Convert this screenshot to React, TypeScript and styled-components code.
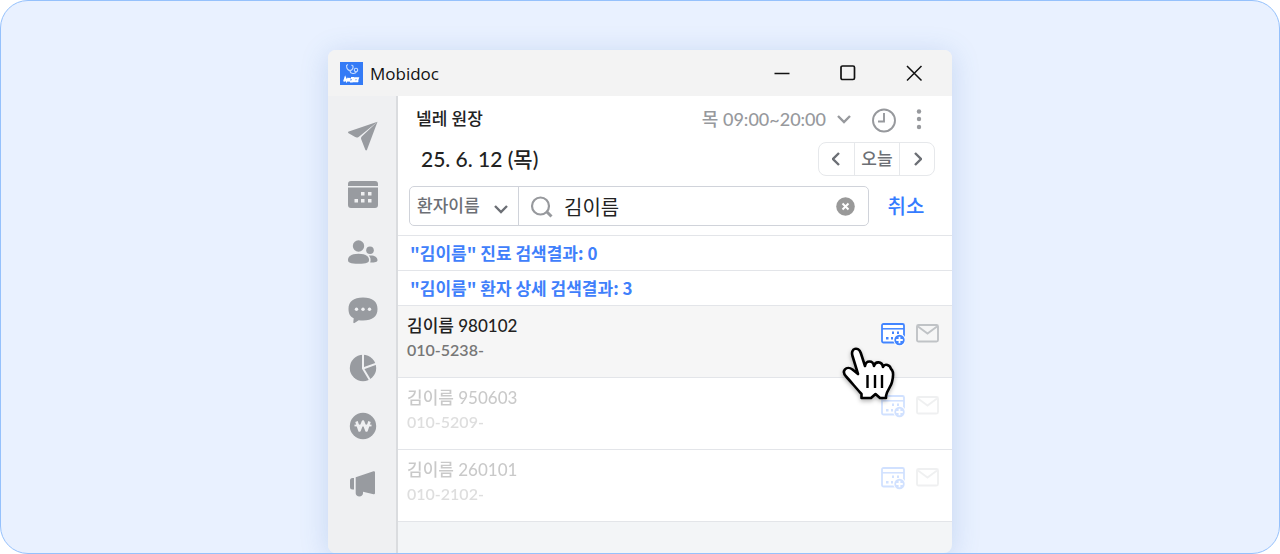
import React, { useState } from "react";
import styled, { createGlobalStyle } from "styled-components";

const GlobalStyle = createGlobalStyle`
  *, *::before, *::after { box-sizing: border-box; }
  body { margin: 0; background: #fff; }
  button, input, select { font: inherit; color: inherit; }
  button { padding: 0; border: 0; background: none; cursor: pointer; }
  h1, h2, p, ul { margin: 0; padding: 0; font: inherit; }
  svg { display: block; flex: none; }
`;

const Stage = styled.main`
  display: flex;
  justify-content: center;
  height: 100vh;
  padding: 49px 24px 0;
  overflow: hidden;
  border: 1px solid #95c1fc;
  border-radius: 28px;
  background: #e9f1ff;
  font-family: Lato, "Noto Sans CJK KR", sans-serif;
`;

const Window = styled.section`
  display: flex;
  flex-direction: column;
  width: 100%;
  max-width: 624px;
  min-height: 100%;
  border-radius: 8px;
  box-shadow: 0 4px 28px rgba(70, 120, 190, 0.22);
  background: #f3f5f7;
  overflow: hidden;
`;

const TitleBar = styled.header`
  display: flex;
  align-items: center;
  height: 46px;
  padding: 0 29px 0 12px;
  background: #f3f3f3;
  color: #111;
`;

const AppName = styled.h1`
  flex: 1;
  margin-left: 7px;
  padding-top: 2px;
  font: 400 17px/24px "Open Sans", "Noto Sans", sans-serif;
`;

const WindowControls = styled.div`
  display: flex;
  gap: 48px;
`;

const Body = styled.div`
  display: flex;
  flex: 1;
`;

const Rail = styled.nav`
  display: flex;
  flex-direction: column;
  gap: 26px;
  width: 70px;
  padding: 24px 0 0 2px;
  border-right: 2px solid #dadcdf;
  background: #eff0f2;
  color: #989ba0;
`;

const RailButton = styled.button`
  display: flex;
  justify-content: center;
  align-items: center;
  height: 32px;
`;

const Content = styled.div`
  flex: 1;
  min-width: 0;
`;

const Panel = styled.div`
  background: #fff;
  border-bottom: 1px solid #e3e5e9;
  padding: 8px 0 9px 11px;
`;

const Row = styled.div`
  display: flex;
  align-items: center;
  justify-content: space-between;
`;

const DoctorRow = styled(Row)`
  height: 32px;
  padding: 0 30px 0 7px;
`;

const Doctor = styled.h2`
  padding-bottom: 3px;
  color: #222;
  font-size: 17px;
  font-weight: 500;
  line-height: 24px;
`;

const Hours = styled.div`
  display: flex;
  align-items: center;
  color: #97999d;
`;

const HoursButton = styled.button`
  display: flex;
  align-items: center;
  gap: 11px;
  margin-right: 20px;
  padding-bottom: 2px;
  font-size: 18px;
  font-weight: 500;
  line-height: 24px;
`;

const MoreButton = styled.button`
  margin-left: 19px;
`;

const DateRow = styled(Row)`
  height: 50px;
  padding: 0 17px 4px 12px;
`;

const DateText = styled.p`
  color: #222;
  font-size: 21px;
  font-weight: 500;
  line-height: 28px;
`;

const DateNav = styled.div`
  display: flex;
  height: 34px;
  border: 1px solid #e6e8eb;
  border-radius: 8px;
  color: #6c6f75;
`;

const DateButton = styled.button<{ $wide?: boolean }>`
  display: flex;
  align-items: center;
  justify-content: center;
  width: ${(p) => (p.$wide ? 45 : 35)}px;
  font-size: 17px;
  font-weight: 500;
  line-height: 24px;
  & + & { border-left: 1px solid #e6e8eb; }
`;

const SearchRow = styled.form`
  display: flex;
  align-items: center;
`;

const SearchBox = styled.div`
  display: flex;
  flex: 1;
  min-width: 0;
  height: 40px;
  border: 1px solid #d0d3da;
  border-radius: 5px;
`;

const FieldPicker = styled.div`
  display: grid;
  grid-template-columns: 1fr auto;
  align-items: center;
  width: 109px;
  padding-right: 10px;
  border-right: 1px solid #d0d3da;
  color: #6c6f75;
  svg { grid-area: 1 / 2; pointer-events: none; margin-top: 6px; }
`;

const FieldSelect = styled.select`
  grid-area: 1 / 1 / 2 / 3;
  height: 38px;
  padding: 0 0 2px 7px;
  border: 0;
  outline: 0;
  appearance: none;
  background: transparent;
  font-size: 17px;
  font-weight: 500;
`;

const QueryField = styled.label`
  display: flex;
  flex: 1;
  align-items: center;
  gap: 10px;
  min-width: 0;
  padding: 0 13px 0 11px;
  color: #97999d;
`;

const QueryInput = styled.input`
  flex: 1;
  min-width: 0;
  height: 36px;
  padding: 0;
  border: 0;
  outline: 0;
  background: transparent;
  color: #222;
  font-size: 20px;
  font-weight: 400;
`;

const CancelButton = styled.button`
  width: 83px;
  padding-right: 9px;
  color: #347bff;
  font-size: 20px;
  font-weight: 500;
  line-height: 28px;
`;

const ResultHeading = styled.h2`
  height: 35px;
  padding-left: 12px;
  border-bottom: 1px solid #e3e5e9;
  background: #fff;
  color: #3f80fb;
  font-family: "Noto Sans CJK KR", sans-serif;
  font-size: 17px;
  font-weight: 700;
  line-height: 34px;
`;

const PatientList = styled.ul`
  list-style: none;
`;

const PatientRow = styled.li<{ $active?: boolean }>`
  display: flex;
  justify-content: space-between;
  height: 72px;
  padding: 7px 13px 0 9px;
  border-bottom: 1px solid #e3e5e9;
  background: ${(p) => (p.$active ? "#f6f6f6" : "#fff")};
  & > div { opacity: ${(p) => (p.$active ? 1 : 0.24)}; }
`;

const PatientName = styled.p`
  color: #222;
  font-size: 17px;
  font-weight: 500;
  line-height: 26px;
`;

const Phone = styled.p`
  color: #777;
  font-size: 16px;
  font-weight: 600;
  line-height: 22px;
`;

const Actions = styled.div`
  display: flex;
  align-items: flex-start;
  gap: 11px;
  padding-top: 10px;
  position: relative;
`;

const Hand = styled.svg`
  position: absolute;
  top: 34px;
  right: 45px;
  z-index: 1;
  overflow: visible;
  pointer-events: none;
  filter: drop-shadow(0 2px 2px rgba(0, 0, 0, 0.3));
`;

const Logo = () => (
  <svg width="23" height="23" viewBox="0 0 23 23" aria-hidden="true">
    <path fill="#347bf6" d="M0 0h23v23H0z" />
    <g fill="none" stroke="#c3daff" strokeWidth="1.1">
      <path d="M8 2.500 6.500 3.500c0 3 1.500 5 3.500 5s3.500-2 3-4.500L11.500 3M10 8.500c0 3.500 5 4 6.500 1.300" />
      <circle cx="16" cy="8" r="1.700" />
    </g>
    <path stroke="#fff" strokeWidth="1.900" fill="none" d="m4 19.500 1.200-3.500 1.300 3 2-3-1 3.500m2.500-3.500-1 3.500m2-3.500h2l-1 3.500h-2m4-.2 1-3h3l-1 3zm3-.500 1.200 1" />
  </svg>
);

const Chevron = ({ d = "m1 1 6 6 6-6", w = 14, h = 9 }: { d?: string; w?: number; h?: number }) => (
  <svg width={w} height={h} viewBox={`0 0 ${w} ${h}`} fill="none" stroke="currentColor" strokeWidth="2.400" aria-hidden="true">
    <path d={d} />
  </svg>
);

const CalendarAdd = () => (
  <svg width="24" height="23" viewBox="0 0 24 23" aria-hidden="true">
    <rect x="1" y="1" width="22" height="18.500" rx="1.500" fill="#fff" stroke="#4285ff" strokeWidth="1.800" />
    <path stroke="#4285ff" strokeWidth="1.500" d="M1 5.800h22" />
    <path fill="#4285ff" d="M11 8.500h2V11h-2zM16 8.500h2V11h-2zM5 14h2.500v2.500H5zM10 14h2v2.500h-2z" />
    <circle cx="18.500" cy="17" r="6.200" fill="#fff" />
    <circle cx="18.500" cy="17" r="5.200" fill="#4285ff" />
    <path stroke="#fff" strokeWidth="1.800" d="M18.500 13.700v6.600M15.200 17h6.600" />
  </svg>
);

const Mail = () => (
  <svg width="23" height="20" viewBox="0 0 23 20" fill="none" stroke="#c0c3c6" strokeWidth="1.900" aria-hidden="true">
    <rect x="1" y="2" width="21" height="16.500" rx="1.500" />
    <path d="m2 3.500 9.500 7 9.500-7" />
  </svg>
);

const railItems = [
  { label: "보내기", icon: (
    <svg width="30" height="30" viewBox="0 0 30 30" fill="currentColor">
      <path d="M29.500.800.800 10.600c-.9.300-1 1.200-.2 1.700l6.600 3.800c1.200.6 2.300.5 3.400-.2zM29.500.800 14 15.200c-1 .9-1.200 1.900-.8 3l4.100 10.500c.4.900 1.300.9 1.700 0z" />
    </svg>) },
  { label: "일정", icon: (
    <svg width="30" height="27" viewBox="0 0 30 27" fill="currentColor">
      <path d="M3 0h24a3 3 0 0 1 3 3v2H0V3a3 3 0 0 1 3-3z" />
      <path fillRule="evenodd" d="M0 6.500h30V24a3 3 0 0 1-3 3H3a3 3 0 0 1-3-3zm13 4.500v3.500h3.500V11zm7 0v3.500h3.500V11zM6.500 18v3.500H10V18zm6.500 0v3.500h3.500V18zm7 0v3.500h3.500V18z" />
    </svg>) },
  { label: "환자", icon: (
    <svg width="30" height="24" viewBox="0 0 30 24" fill="currentColor">
      <circle cx="10.500" cy="6" r="5.700" />
      <path d="M0 20c0-4 4-6.300 10.500-6.300S21 16 21 20c0 2.500-2 3.800-10.500 3.800S0 22.500 0 20z" />
      <circle cx="22" cy="10.200" r="3.800" />
      <path d="M20.800 15.600c5-.8 8.700 1.400 8.700 4.400 0 2-2 2.600-7.300 2.600.8-2.500.5-5-1.400-7z" />
    </svg>) },
  { label: "메시지", icon: (
    <svg width="30" height="27" viewBox="0 0 30 27">
      <path fill="currentColor" d="M15 .500c9.500 0 14.500 4 14.500 11.500S24.500 23.500 15 23.500c-1.500 0-3 0-4.300-.3L6.500 26c-.6.400-1.300 0-1.200-.7l.4-4C2 19.500.500 16.500.500 12 .500 4.500 5.500.500 15 .500z" />
      <g fill="#eff0f2"><circle cx="8.500" cy="12.200" r="1.700" /><circle cx="15" cy="12.200" r="1.700" /><circle cx="21.500" cy="12.200" r="1.700" /></g>
    </svg>) },
  { label: "통계", icon: (
    <svg width="28" height="28" viewBox="0 0 28 28">
      <circle cx="14" cy="14" r="13.200" fill="currentColor" />
      <path fill="none" stroke="#eff0f2" strokeWidth="2" d="M14 0v14.500L21.500 27M14 14.500 28 9.500" />
    </svg>) },
  { label: "수납", icon: (
    <svg width="28" height="28" viewBox="0 0 28 28">
      <circle cx="14" cy="14" r="13.200" fill="currentColor" />
      <path fill="none" stroke="#eff0f2" strokeWidth="2.600" strokeLinejoin="round" d="m7.500 9.500 3 9 3.500-9 3.500 9 3-9" />
      <path stroke="#eff0f2" strokeWidth="1.800" d="M5.500 13.500h17" />
    </svg>) },
  { label: "공지", icon: (
    <svg width="28" height="28" viewBox="0 0 28 28" fill="currentColor">
      <path d="M3.500 8H5v11.500H3.500A2.500 2.500 0 0 1 1 17v-6.500A2.500 2.500 0 0 1 3.500 8zM6.700 7.200 24.500 1.200a1.200 1.200 0 0 1 1.500 1.100v20.800a1.200 1.200 0 0 1-1.500 1.100L14 21.700v1.500c0 1.900-1.500 3.200-3.600 3.200s-3.700-1.300-3.700-3.200z" />
    </svg>) },
];

const patients = [
  { name: "김이름 980102", phone: "010-5238-", active: true },
  { name: "김이름 950603", phone: "010-5209-", active: false },
  { name: "김이름 260101", phone: "010-2102-", active: false },
];

export default function App() {
  const [query, setQuery] = useState("김이름");
  return (
    <>
      <GlobalStyle />
      <Stage>
        <Window>
          <TitleBar>
            <Logo />
            <AppName>Mobidoc</AppName>
            <WindowControls>
              <button type="button" aria-label="최소화">
                <svg width="18" height="18" viewBox="0 0 18 18"><path stroke="#111" strokeWidth="1.600" d="M1.500 9.500h15" /></svg>
              </button>
              <button type="button" aria-label="최대화">
                <svg width="18" height="18" viewBox="0 0 18 18"><rect x="2" y="2" width="13.500" height="13.500" rx="1.500" fill="none" stroke="#111" strokeWidth="1.700" /></svg>
              </button>
              <button type="button" aria-label="닫기">
                <svg width="18" height="18" viewBox="0 0 18 18"><path stroke="#111" strokeWidth="1.500" d="m2 2 14.500 14.500M16.500 2 2 16.500" /></svg>
              </button>
            </WindowControls>
          </TitleBar>
          <Body>
            <Rail aria-label="메뉴">
              {railItems.map((item) => (
                <RailButton type="button" key={item.label} aria-label={item.label}>{item.icon}</RailButton>
              ))}
            </Rail>
            <Content>
              <Panel>
                <DoctorRow>
                  <Doctor>넬레 원장</Doctor>
                  <Hours>
                    <HoursButton type="button">목 09:00~20:00<Chevron /></HoursButton>
                    <button type="button" aria-label="진료 시간">
                      <svg width="26" height="26" viewBox="0 0 26 26" fill="none" stroke="currentColor" strokeWidth="1.900">
                        <circle cx="13" cy="13.500" r="11" /><path d="M13 6v8.500H7" />
                      </svg>
                    </button>
                    <MoreButton type="button" aria-label="더보기">
                      <svg width="6" height="22" viewBox="0 0 6 22" fill="currentColor">
                        <circle cx="3" cy="2.500" r="2.200" /><circle cx="3" cy="10" r="2.200" /><circle cx="3" cy="18" r="2.200" />
                      </svg>
                    </MoreButton>
                  </Hours>
                </DoctorRow>
                <DateRow>
                  <DateText>25. 6. 12 (목)</DateText>
                  <DateNav>
                    <DateButton type="button" aria-label="이전 날"><Chevron w={9} h={14} d="M7 1 1 7l6 6" /></DateButton>
                    <DateButton type="button" $wide>오늘</DateButton>
                    <DateButton type="button" aria-label="다음 날"><Chevron w={9} h={14} d="m2 1 6 6-6 6" /></DateButton>
                  </DateNav>
                </DateRow>
                <SearchRow onSubmit={(e) => e.preventDefault()}>
                  <SearchBox>
                    <FieldPicker>
                      <FieldSelect aria-label="검색 항목"><option>환자이름</option></FieldSelect>
                      <Chevron />
                    </FieldPicker>
                    <QueryField>
                      <svg width="24" height="24" viewBox="0 0 24 24" fill="none" stroke="currentColor" strokeWidth="2.200" aria-hidden="true">
                        <circle cx="10.500" cy="12" r="8.500" /><path strokeWidth="3" d="m17 18 4.500 4.500" />
                      </svg>
                      <QueryInput aria-label="검색어" value={query} onChange={(e) => setQuery(e.target.value)} />
                      <button type="button" aria-label="지우기" onClick={() => setQuery("")}>
                        <svg width="19" height="19" viewBox="0 0 19 19">
                          <circle cx="9.500" cy="9.500" r="9.300" fill="#999" /><path stroke="#fff" strokeWidth="2" d="m6.500 6.500 6 6m0-6-6 6" />
                        </svg>
                      </button>
                    </QueryField>
                  </SearchBox>
                  <CancelButton type="button">취소</CancelButton>
                </SearchRow>
              </Panel>
              <ResultHeading>"김이름" 진료 검색결과: 0</ResultHeading>
              <ResultHeading>"김이름" 환자 상세 검색결과: 3</ResultHeading>
              <PatientList>
                {patients.map((p) => (
                  <PatientRow key={p.name} $active={p.active}>
                    <div>
                      <PatientName>{p.name}</PatientName>
                      <Phone>{p.phone}</Phone>
                    </div>
                    <Actions>
                      <button type="button" aria-label="예약 추가"><CalendarAdd /></button>
                      <button type="button" aria-label="메시지 보내기"><Mail /></button>
                      {p.active && (
                        <Hand width="52" height="53" viewBox="0 0 52 53" aria-hidden="true">
                          <path fill="#fff" stroke="#000" strokeWidth="2.600" strokeLinejoin="round" d="M16 27 10.500 9C8 1 16.500-1 18.800 6L23 19c1-6 8-6 9 0 1-5 8-5 9 1 2-4 7-2 8 2l1 1c2 3 1 8 0 12-1 5-5 8-6 14v2h-6l-4.500-4-4.500 4H19.500v-4C14 41 10 36 4.500 30c-6-6 0-12 6-7.500z" />
                          <path stroke="#000" strokeWidth="2.400" d="M25.500 28v13M33 28v13M40 28v13" />
                        </Hand>
                      )}
                    </Actions>
                  </PatientRow>
                ))}
              </PatientList>
            </Content>
          </Body>
        </Window>
      </Stage>
    </>
  );
}
